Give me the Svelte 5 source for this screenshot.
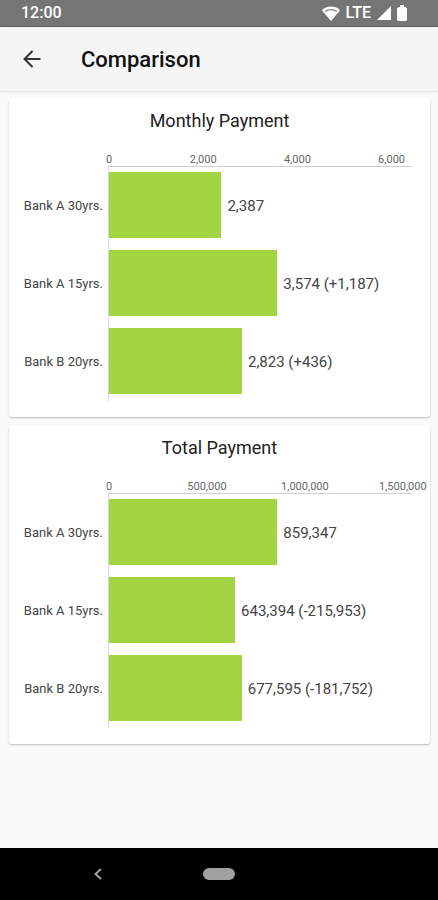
<script>
  const charts = [
    {
      title: 'Monthly Payment',
      step: 2000,
      rows: [
        { label: 'Bank A 30yrs.', value: 2387 },
        { label: 'Bank A 15yrs.', value: 3574 },
        { label: 'Bank B 20yrs.', value: 2823 },
      ],
    },
    {
      title: 'Total Payment',
      step: 500000,
      rows: [
        { label: 'Bank A 30yrs.', value: 859347 },
        { label: 'Bank A 15yrs.', value: 643394 },
        { label: 'Bank B 20yrs.', value: 677595 },
      ],
    },
  ];

  const fmt = (n) => n.toLocaleString('en-US');

  // Leave room to the right of the longest bar for its value text
  const axisMax = (chart) => Math.max(...chart.rows.map((r) => r.value)) * 1.8;

  function ticks(chart) {
    const count = Math.floor(axisMax(chart) / chart.step);
    return Array.from({ length: count + 1 }, (_, i) => i * chart.step);
  }

  // Value, followed by the difference to the first row
  function valueText(chart, row) {
    const diff = row.value - chart.rows[0].value;
    if (diff === 0) return fmt(row.value);
    return `${fmt(row.value)} (${diff > 0 ? '+' : ''}${fmt(diff)})`;
  }
</script>

<div class="screen">
  <div class="status-bar">
    <span class="clock">12:00</span>
    <div class="status-icons">
      <svg width="18" height="15" viewBox="0 0 18 15" aria-hidden="true">
        <path d="M9 15 .5 5C0 4.300 .3 3.700 1 3.200 3 1.300 6 .5 9 .5s6 .8 8 2.700c.7 .5 1 1.100 .5 1.800z" fill="#fff" />
        <path d="M3 5.400C6.500 3.100 11.500 3.100 15 5.400" fill="none" stroke="#8a8a8a" stroke-width="1.500" />
      </svg>
      <span class="network">LTE</span>
      <svg width="14" height="14" viewBox="0 0 14 14" aria-hidden="true">
        <path d="M14 0v14H0z" fill="#fff" />
      </svg>
      <svg width="10" height="16" viewBox="0 0 10 16" aria-hidden="true">
        <path d="M3 0h4v2h1.500L10 3.500V15l-1 1H1l-1-1V3.500L1.500 2H3z" fill="#fff" />
      </svg>
    </div>
  </div>

  <header class="app-bar">
    <button class="back" aria-label="Back">
      <svg width="18" height="18" viewBox="0 0 18 18" aria-hidden="true">
        <path d="M17.500 9H2M9.500 1 1.500 9l8 8" fill="none" stroke="#333" stroke-width="2" />
      </svg>
    </button>
    <h1>Comparison</h1>
  </header>

  <main>
    {#each charts as chart}
      <section class="card">
        <h2>{chart.title}</h2>
        <div class="ticks">
          {#each ticks(chart) as tick, i}
            <span class="tick" style="margin-left: {i ? (chart.step / axisMax(chart)) * 100 : 0}%">{fmt(tick)}</span>
          {/each}
        </div>
        <div class="plot">
          <div class="labels">
            {#each chart.rows as row}
              <span class="label">{row.label}</span>
            {/each}
          </div>
          <div class="bars">
            {#each chart.rows as row}
              <div class="row">
                <div class="bar" style="width: {(row.value / axisMax(chart)) * 100}%"></div>
                <span class="value">{valueText(chart, row)}</span>
              </div>
            {/each}
          </div>
        </div>
      </section>
    {/each}
  </main>

  <nav class="nav-bar">
    <button class="nav-back" aria-label="Navigate back">
      <svg width="8" height="12" viewBox="0 0 8 12" aria-hidden="true">
        <path d="M7 1 1.500 6 7 11" fill="none" stroke="#a0a0a0" stroke-width="2" />
      </svg>
    </button>
    <button class="nav-home" aria-label="Home"></button>
  </nav>
</div>

<style>
  :global(body) {
    background: #fafafa;
  }

  .screen {
    min-height: 100vh;
    display: flex;
    flex-direction: column;
    background: #fafafa;
    color: #222;
    font-family: Roboto, 'Liberation Sans', sans-serif;
  }

  button {
    border: none;
    padding: 0;
    background: none;
    cursor: pointer;
  }

  svg {
    display: block;
  }

  .status-bar {
    height: 26px;
    padding: 0 31px 0 21px;
    display: flex;
    align-items: center;
    justify-content: space-between;
    background: #757575;
    border-bottom: 1px solid #5f5f5f;
    color: #fff;
  }

  .clock {
    font-size: 16px;
    font-weight: 500;
    line-height: 28px;
  }

  .status-icons {
    display: flex;
    align-items: center;
    gap: 6px;
  }

  .network {
    font-size: 16px;
    font-weight: 500;
    line-height: 28px;
  }

  .app-bar {
    height: 64px;
    padding: 0 23px;
    display: flex;
    align-items: center;
    gap: 40px;
    background: #f5f5f5;
    border-bottom: 1px solid #e6e6e6;
    box-shadow: 0 1px 2px rgba(0, 0, 0, 0.06);
  }

  h1 {
    margin: 0;
    font-size: 22px;
    font-weight: 500;
    color: #111;
  }

  main {
    flex: 1;
    padding: 6px 8px 6px 9px;
    display: flex;
    flex-direction: column;
    gap: 8px;
  }

  .card {
    padding: 10px 18px 16px 9px;
    background: #fff;
    border-radius: 3px;
    box-shadow: 0 1px 2px rgba(0, 0, 0, 0.25);
  }

  h2 {
    margin: 0 -9px 0 0;
    font-size: 18px;
    font-weight: 400;
    line-height: 26px;
    text-align: center;
  }

  .ticks {
    margin: 19px 0 0 91px;
    display: flex;
    font-size: 11px;
    line-height: 13px;
    color: #666;
  }

  /* Zero width, so that the text is centred on the tick's position */
  .tick {
    width: 0;
    display: flex;
    justify-content: center;
    white-space: nowrap;
  }

  .plot {
    display: flex;
  }

  .labels {
    width: 90px;
    display: flex;
    flex-direction: column;
  }

  .label {
    height: 78px;
    padding-right: 5px;
    font-size: 13px;
    line-height: 80px;
    text-align: right;
    color: #444;
  }

  .bars {
    flex: 1;
    border-top: 1px solid #d0d0d0;
    border-left: 1px solid #d8d8e0;
  }

  .row {
    height: 78px;
    display: flex;
    align-items: flex-start;
    gap: 6px;
  }

  .bar {
    height: 66px;
    margin-top: 5px;
    flex: none;
    background: #a2d541;
  }

  .value {
    font-size: 15px;
    line-height: 78px;
    white-space: nowrap;
    color: #444;
  }

  .nav-bar {
    height: 52px;
    display: grid;
    grid-template-columns: 1fr 32px 1fr;
    align-items: center;
    background: #000;
  }

  .nav-back {
    margin-right: 8px;
    justify-self: center;
  }

  .nav-home {
    height: 12px;
    border-radius: 6px;
    background: #a0a0a0;
  }
</style>
